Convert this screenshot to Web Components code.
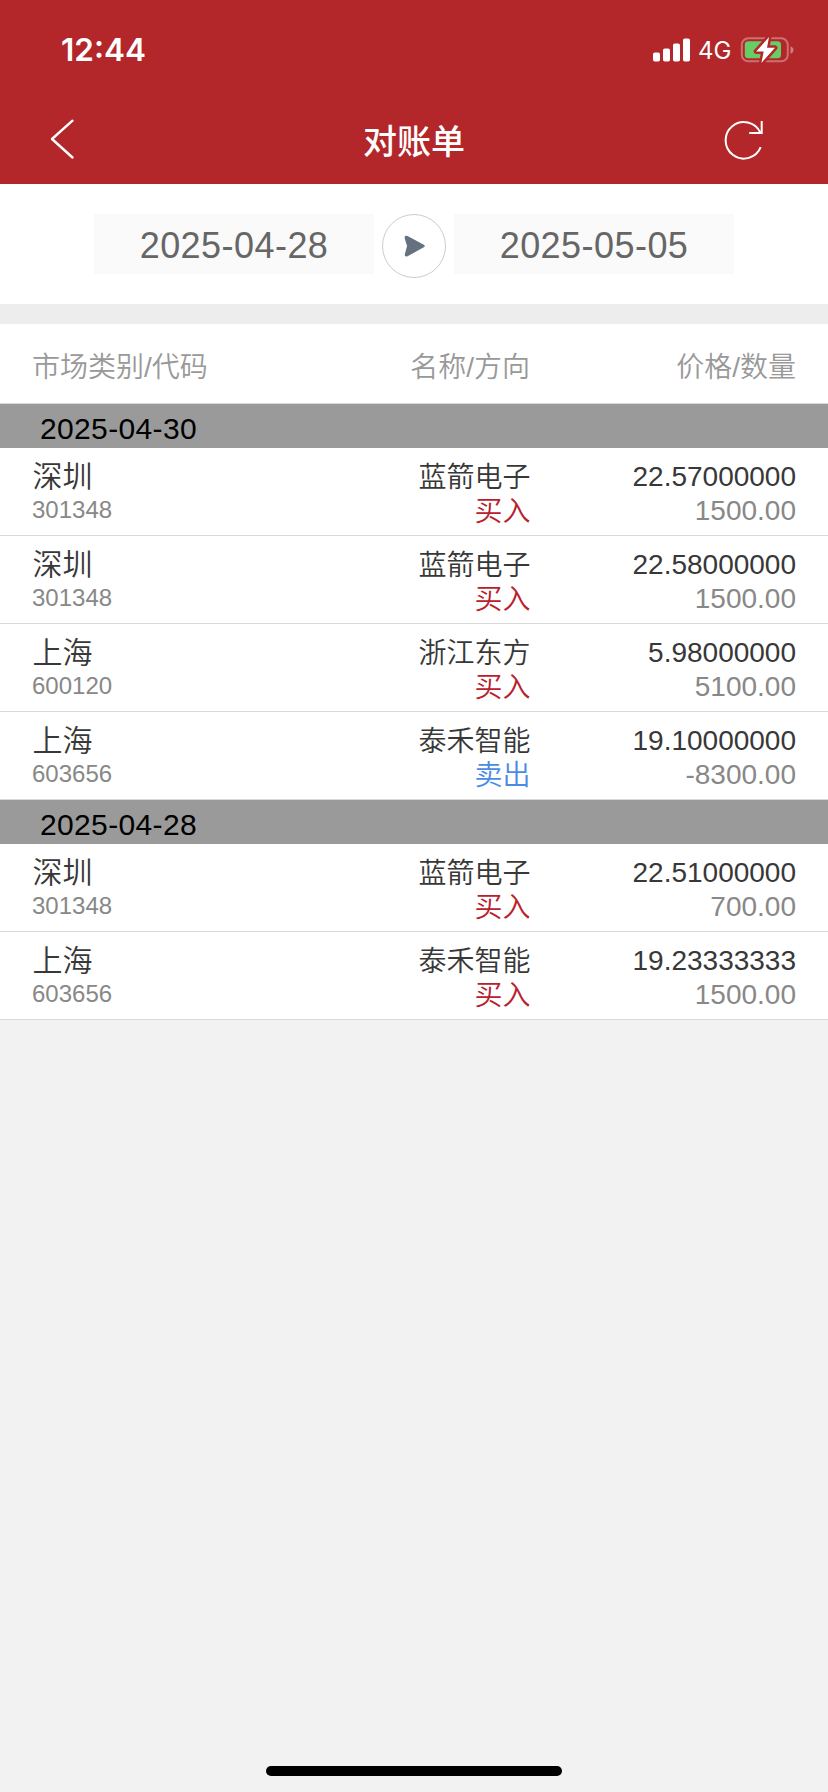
<!DOCTYPE html>
<html lang="zh-CN">
<head>
<meta charset="utf-8">
<title>对账单</title>
<style>
body{margin:0;background:#f2f2f2;font-family:"Liberation Sans","Noto Sans CJK SC",sans-serif}
</style>
</head>
<body>
<statement-app></statement-app>
<script>
const define = (name, html) => customElements.define(name, class extends HTMLElement {
  constructor() {
    super();
    const t = document.createElement('template');
    t.innerHTML = html;
    this.attachShadow({mode: 'open'}).append(t.content.cloneNode(true));
  }
});

define('status-bar', `
<style>
:host{display:flex;height:96px;box-sizing:border-box;padding:4px 34px 0 61px;align-items:center;justify-content:space-between;color:#fff;font-family:Inter,sans-serif}
.time{font-size:31.5px;font-weight:600;line-height:40px}
.right{display:flex;align-items:center}
.net{font-size:24px;line-height:30px;margin:2px 9px 0 8px;width:33px;white-space:nowrap}
svg{display:block}
</style>
<span class="time">12:44</span>
<div class="right">
<svg width="38" height="24" viewBox="0 0 38 24" fill="#fff"><rect x="1" y="14.5" width="7" height="9" rx="1.8"/><rect x="11" y="10.5" width="7" height="13" rx="1.8"/><rect x="21" y="5.5" width="7" height="18" rx="1.8"/><rect x="31" y=".5" width="7" height="23" rx="1.8"/></svg>
<span class="net">4G</span>
<svg width="54" height="28" viewBox="0 0 54 28"><rect x="1.8" y="2.3" width="46" height="23" rx="6.5" fill="none" stroke="#fff" stroke-opacity=".34" stroke-width="2"/><path d="M50.5 10.2c2 .7 3 2 3 3.800s-1 3.100-3 3.800z" fill="#fff" fill-opacity=".4"/><rect x="4.800" y="5.300" width="36.200" height="17" rx="3.500" fill="#67ce67"/><path d="M29 1 16.200 15.500h7.500L21.400 27 35 11.800h-8z" fill="#fff" stroke="#b32629" stroke-width="5" stroke-linejoin="round" paint-order="stroke"/></svg>
</div>`);

define('nav-bar', `
<style>
:host{display:grid;grid-template-columns:150px 1fr 150px;height:88px;align-items:center;color:#fff}
.title{text-align:center;font:500 34px/44px "Noto Sans CJK SC",sans-serif}
svg{display:block}
.back{margin:-3px 0 0 49px}
.reload{margin:0 0 0 46px}
</style>
<svg class="back" width="28" height="42" viewBox="0 0 28 42" fill="none" stroke="#fff" stroke-width="2.400" stroke-linecap="round" stroke-linejoin="round"><path d="M23.500 2.700 3 21l20.500 18.500"/></svg>
<span class="title"><slot></slot></span>
<svg class="reload" width="40" height="40" viewBox="0 0 40 40" fill="none" stroke="#fff" stroke-width="2"><path d="M36.700 27.200A18.200 18.200 0 1 1 36.300 12.600M37.700 1v12H25.200"/></svg>`);

define('date-field', `
<style>
:host{display:block;width:280px;height:60px;background:#fafafa;color:#666;font-size:36px;line-height:64px;text-align:center;letter-spacing:.45px;white-space:nowrap}
</style><slot></slot>`);

define('date-range', `
<style>
:host{display:flex;height:120px;box-sizing:border-box;padding-top:30px;background:#fff;justify-content:center;align-items:flex-start;gap:8px}
svg{display:block}
</style>
<date-field>2025-04-28</date-field>
<svg width="64" height="64" viewBox="0 0 64 64"><circle cx="32" cy="32" r="31.500" fill="#fff" stroke="#ccc"/><path d="M25.300 22.500 41.500 31.200q1.200.8 0 1.600L25.300 41.700q-2.600.8-1.700-2L25.700 32l-2.300-7.500q-.6-3 1.900-2z" fill="#667180" stroke="#667180" stroke-width="1.200"/></svg>
<date-field>2025-05-05</date-field>`);

define('column-head', `
<style>
:host{display:grid;grid-template-columns:1fr 1fr 266px;height:80px;box-sizing:border-box;padding:0 32px;border-bottom:1px solid #d9d9d9;background:#fff;color:#999;font-size:28px;line-height:87px;font-weight:350}
span{height:79px}
span+span{text-align:right}
</style>
<span>市场类别/代码</span><span>名称/方向</span><span>价格/数量</span>`);

define('day-head', `
<style>
:host{display:block;height:44px;box-sizing:border-box;padding:6px 40px 0;background:#9a9a9a;color:#000;font-size:30px;line-height:38px;letter-spacing:.35px}
</style><slot></slot>`);

define('trade-row', `
<style>
:host{display:grid;grid-template-columns:1fr 1fr 266px;grid-template-rows:34px 34px;height:88px;box-sizing:border-box;padding:12px 32px 0;border-bottom:1px solid #d9d9d9;background:#fff;color:#383838;font-size:28px;line-height:34px;font-weight:350}
.r{text-align:right}
.market{font-size:30px;padding-left:.5px}
.name,.side{line-height:35px;margin-right:-.5px}
.code{font-size:24px;line-height:32px;color:#888}
.side{color:var(--side,#b8202c)}
.qty{color:#888}
</style>
<span class="market"><slot name="market"></slot></span><span class="r name"><slot name="name"></slot></span><span class="r"><slot name="price"></slot></span>
<span class="code"><slot name="code"></slot></span><span class="r side"><slot name="side"></slot></span><span class="r qty"><slot name="qty"></slot></span>`);

const row = (market, code, name, side, price, qty) => `<trade-row${side === '卖出' ? ' class="sell"' : ''}><span slot="market">${market}</span><span slot="code">${code}</span><span slot="name">${name}</span><span slot="side">${side}</span><span slot="price">${price}</span><span slot="qty">${qty}</span></trade-row>`;

define('statement-app', `
<style>
:host{display:flex;flex-direction:column;width:828px;height:1792px;background:#f2f2f2}
header{background:#b32629}
.gap{height:20px;background:#ededed}
.sell{--side:#4a8be6}
.home{width:296px;height:10px;border-radius:5px;background:#000;margin:auto auto 16px}
</style>
<header><status-bar></status-bar><nav-bar>对账单</nav-bar></header>
<date-range></date-range>
<div class="gap"></div>
<column-head></column-head>
<day-head>2025-04-30</day-head>
${row('深圳', '301348', '蓝箭电子', '买入', '22.57000000', '1500.00')}
${row('深圳', '301348', '蓝箭电子', '买入', '22.58000000', '1500.00')}
${row('上海', '600120', '浙江东方', '买入', '5.98000000', '5100.00')}
${row('上海', '603656', '泰禾智能', '卖出', '19.10000000', '-8300.00')}
<day-head>2025-04-28</day-head>
${row('深圳', '301348', '蓝箭电子', '买入', '22.51000000', '700.00')}
${row('上海', '603656', '泰禾智能', '买入', '19.23333333', '1500.00')}
<div class="home"></div>`);
</script>
</body>
</html>
